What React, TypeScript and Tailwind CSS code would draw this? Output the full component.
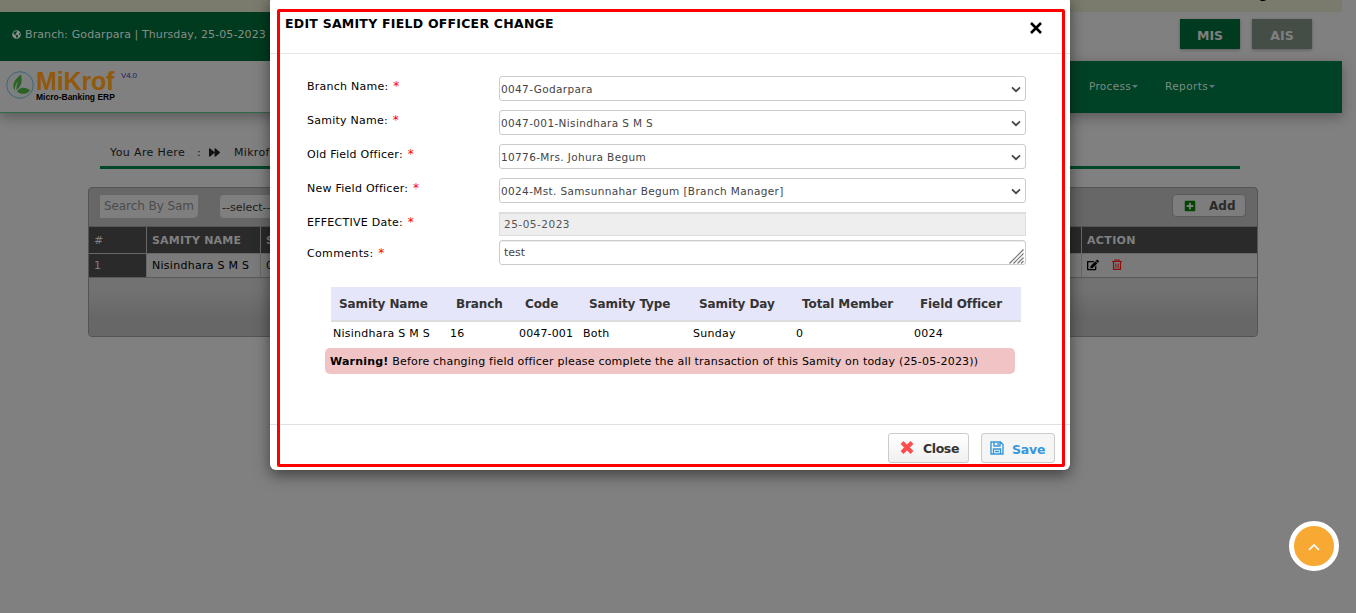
import React from "react";
import { FaGlobeAmericas, FaForward, FaPlusSquare, FaEdit } from "react-icons/fa";

type Field = { label: string; value: string };

const selects: Field[] = [
  { label: "Branch Name:", value: "0047-Godarpara" },
  { label: "Samity Name:", value: "0047-001-Nisindhara S M S" },
  { label: "Old Field Officer:", value: "10776-Mrs. Johura Begum" },
  { label: "New Field Officer:", value: "0024-Mst. Samsunnahar Begum [Branch Manager]" },
];

function Logo() {
  return (
    <div className="flex pl-[6px] pt-[8px]">
      <svg width="28" height="29" viewBox="0 0 28 29" className="mt-[2px]">
        <circle cx="14" cy="14" r="13.3" fill="#7d7f80" stroke="#3d6878" strokeWidth="1" />
        <path d="M9 19.500C5 14 9 8 15 3.500C16.500 10 15.500 15.500 10.500 19C10 16 11 13 12.500 10C9.500 13 8.500 16 9 19.500Z" fill="#2b6324" />
        <path d="M11 20.500C14 15.500 20 16 24 19.500C21 23.500 15 24 11 20.500Z" fill="#2b6324" />
      </svg>
      <div className="ml-[2px] flex w-[79px] flex-col">
        <span className="h-[23px] font-['Liberation_Sans',sans-serif] text-[25px] font-bold leading-[24px] tracking-[-0.15px] text-[#915909]">MiKrof</span>
        <span className="whitespace-nowrap font-['Liberation_Sans',sans-serif] text-[8.500px] font-bold leading-[10px] text-black">Micro-Banking ERP</span>
      </div>
      <span className="ml-[6px] mt-[2px] font-['Liberation_Sans',sans-serif] text-[8px] leading-[10px] tracking-[-0.2px] text-[#1b1b60]">V4.0</span>
    </div>
  );
}

function Caret() {
  return <i className="ml-[1px] inline-block border-x-[3px] border-t-[3px] border-x-transparent border-t-[#61768a] align-[2px]" />;
}

function TrashIcon() {
  return (
    <svg width="10" height="12" viewBox="0 0 10 12" fill="none" stroke="#8e0c0c" strokeWidth="1.200">
      <path d="M0 2.500H10M3 2.500V1H7V2.500M1.500 2.500V10.400H8.500V2.500" />
      <path d="M3.500 4.500V9M5 4.500V9M6.500 4.500V9" strokeWidth="0.700" />
    </svg>
  );
}

function Background() {
  return (
    <div className="h-[613px] w-[1356px] overflow-hidden bg-[#808080]">
      <div className="flex h-[12px] w-[1342px] justify-end bg-[#7a7a6d]">
        <span className="mr-[74px] mt-[-13px] text-[13px] font-bold leading-[13px] text-black">g</span>
      </div>
      <div className="flex h-[49px] w-[1342px] justify-between">
        <div className="flex h-[49px] w-[520px] bg-[#003b1f] pl-[12px] pt-[15px] text-[11px] leading-[16px] text-[#878f8a]">
          <FaGlobeAmericas className="mr-[4px] mt-[3px] h-[9px] w-[9px]" />
          <span className="tracking-[0.09px]">Branch: Godarpara | Thursday, 25-05-2023</span>
        </div>
        <div className="mr-[30px] mt-[7px] flex gap-3 text-[12.500px] font-bold text-[#808080]">
          <span className="flex h-[30px] w-[60px] items-center justify-center bg-[#003b1f] pt-[4px] shadow-[0_1px_3px_rgba(0,0,0,.3)]">MIS</span>
          <span className="flex h-[30px] w-[60px] items-center justify-center bg-[#444d46] pt-[4px] shadow-[0_1px_3px_rgba(0,0,0,.3)]">AIS</span>
        </div>
      </div>
      <div className="flex h-[52px] w-[1342px] shadow-[0_4px_12px_rgba(0,0,0,.3)]">
        <div className="h-[52px] w-[520px] border-b border-[#30694c] bg-[#808080]"><Logo /></div>
        <div className="flex flex-1 bg-[#004225] pl-[569px] pt-[17px] text-[10.500px] leading-[16px] text-[#7c8c83]">
          <span className="w-[76px] tracking-[0.3px]">Process<Caret /></span>
          <span className="tracking-[0.4px]">Reports<Caret /></span>
        </div>
      </div>
      <div className="ml-[100px] mt-[29px] flex h-[27px] w-[1140px] border-b-[3px] border-[#004828] pl-[10px] pt-[3px] text-[11px] leading-[16px] text-[#111]">
        <span className="w-[87px] tracking-[0.38px]">You Are Here</span>
        <span className="w-[12px]">:</span>
        <FaForward className="mr-[14px] mt-[2px] h-[11px] w-[11px]" />
        <span className="tracking-[0.3px]">Mikrof</span>
      </div>
      <div className="ml-[88px] mt-[18px] h-[150px] w-[1170px] overflow-hidden rounded border border-[#545454] bg-[#676767]">
        <div className="flex h-[39px] justify-between border-b border-[#555]">
          <div className="flex">
            <span className="ml-[11px] mt-[7px] h-[23px] w-[98px] overflow-hidden rounded-br-[5px] bg-[#7f7f7f] pl-[4px] text-[12px] leading-[22px] tracking-[-0.08px] text-[#4b4b4b]">Search By Sam</span>
            <span className="ml-[22px] mt-[7px] h-[23px] w-[140px] rounded bg-[#7f7f7f] pl-[2px] text-[11px] leading-[25px] text-[#1c1c1c]">--select--</span>
          </div>
          <span className="mr-[11px] mt-[6px] flex h-[23px] w-[74px] items-center rounded border border-[#5b5b5b] bg-[#7d7d7d] pl-[11px] text-[12px] font-bold text-[#2a2a2a]">
            <FaPlusSquare className="mr-[13px] h-[12px] w-[12px] text-[#004500]" />Add
          </span>
        </div>
        <div className="flex h-[27px] border-b border-[#686868] bg-[#2a2a2a] text-[11px] font-bold leading-[27px] text-[#808080]">
          <span className="w-[58px] border-r border-[#686868] pl-[5px] font-normal">#</span>
          <span className="w-[114px] border-r border-[#686868] pl-[5px] tracking-[0.2px]">SAMITY NAME</span>
          <span className="w-[821px] border-r border-[#686868] pl-[5px]">SAMITY CODE</span>
          <span className="pl-[5px] tracking-[0.35px]">ACTION</span>
        </div>
        <div className="flex h-[24px] border-b border-[#595959] bg-[#7a7a7a] text-[11px] leading-[23px] text-black">
          <span className="w-[58px] border-r border-[#686868] bg-[#2a2a2a] pl-[5px] text-[#808080]">1</span>
          <span className="w-[114px] border-r border-[#686868] pl-[5px] tracking-[0.27px]">Nisindhara S M S</span>
          <span className="w-[821px] border-r border-[#686868] pl-[5px]">0047-001</span>
          <span className="flex gap-[13px] pl-[5px] pt-[5px]">
            <FaEdit className="h-[12px] w-[12px]" />
            <TrashIcon />
          </span>
        </div>
        <div className="h-[60px] bg-linear-to-b from-[#727272] from-20% to-[#676767] to-65%" />
      </div>
    </div>
  );
}

function Row({ label, children, height }: { label: string; children: React.ReactNode; height: string }) {
  return (
    <div className={"flex " + height}>
      <span className="w-[192px] pt-[2px] text-[11px] leading-[16px] tracking-[0.25px] text-black">{label} <span className="ml-[1px] text-[12px] text-[#f00]">*</span></span>
      {children}
    </div>
  );
}

function Chevron() {
  return <svg width="10" height="7" viewBox="0 0 10 7" className="ml-auto mr-[4px] mt-[9px]"><path d="M1 1.300L5 5.200L9 1.300" fill="none" stroke="#444" strokeWidth="1.700" /></svg>;
}

function Modal() {
  return (
    <div className="absolute left-[270px] top-[-4px] h-[474px] w-[800px] rounded-[6px] bg-white shadow-[0_5px_15px_rgba(0,0,0,.5)]">
      <div className="flex h-[58px] justify-between border-b border-[#e5e5e5] pl-[15px] pr-[28px] text-black">
        <span className="pt-[20px] text-[12.500px] font-bold leading-[16px] tracking-[0.24px]">EDIT SAMITY FIELD OFFICER CHANGE</span>
        <svg width="12" height="12" viewBox="0 0 12 12" className="mt-[26px]"><path d="M1 1L11 11M11 1L1 11" stroke="#000" strokeWidth="2.600" /></svg>
      </div>
      <div className="h-[370px] pl-[37px] pt-[22px]">
        {selects.map((f) => (
          <Row key={f.label} label={f.label} height="h-[34px]">
            <span className="flex h-[25px] w-[527px] rounded-[3px] border border-[#ccc] pl-px text-[10.500px] leading-[25px] text-[#444]">
              <span className="tracking-[0.36px]">{f.value}</span><Chevron />
            </span>
          </Row>
        ))}
        <Row label="EFFECTIVE Date:" height="h-[28px]">
          <span className="h-[24px] w-[527px] border border-[#ddd] bg-[#eee] pl-[4px] text-[10.500px] leading-[23px] tracking-[0.5px] text-[#555] shadow-[inset_0_1px_1px_rgba(0,0,0,.075)]">25-05-2023</span>
        </Row>
        <div className="flex h-[47px]">
          <span className="w-[192px] pt-[5px] text-[11px] leading-[16px] tracking-[0.35px] text-black">Comments: <span className="ml-[1px] text-[12px] text-[#f00]">*</span></span>
          <span className="flex h-[25px] w-[527px] rounded-[3px] border border-[#ccc] pl-[4px] text-[11px] leading-[24px] text-[#444] shadow-[inset_0_1px_1px_rgba(0,0,0,.075)]">
            test
            <svg width="15" height="15" viewBox="0 0 15 15" className="ml-auto mr-px mt-[8px]"><path d="M0.500 14.500L14.500 0.500M4.500 14.500L14.500 4.500M8.500 14.500L14.500 8.500M12 14.500L14.500 12" stroke="#777" strokeWidth="1.200" /></svg>
          </span>
        </div>
        <div className="ml-[24px] w-[690px]">
          <div className="flex h-[35px] border-b-2 border-[#ddd] bg-[#e6e6fa] pl-[8px] text-[12px] font-bold leading-[34px] tracking-[-0.1px] text-[#333]">
            <span className="w-[117px]">Samity Name</span><span className="w-[69px]">Branch</span><span className="w-[64px]">Code</span><span className="w-[110px]">Samity Type</span><span className="w-[103px]">Samity Day</span><span className="w-[118px]">Total Member</span><span>Field Officer</span>
          </div>
          <div className="flex h-[26px] pl-[2px] text-[11px] leading-[23px] tracking-[0.25px] text-black">
            <span className="w-[117px]">Nisindhara S M S</span><span className="w-[69px]">16</span><span className="w-[64px] tracking-[0.15px]">0047-001</span><span className="w-[110px]">Both</span><span className="w-[103px]">Sunday</span><span className="w-[118px]">0</span><span>0024</span>
          </div>
        </div>
        <div className="ml-[18px] h-[26px] w-[690px] rounded-[5px] bg-[#f0c4c4] pl-[5px] text-[11px] leading-[27px] tracking-[0.2px] text-black"><b>Warning!</b> Before changing field officer please complete the all transaction of this Samity on today (25-05-2023))</div>
      </div>
      <div className="flex h-[46px] justify-end gap-3 border-t border-[#dde0e4] pr-[15px] pt-[8px] text-[12.500px] font-bold">
        <span className="flex h-[30px] w-[81px] items-center rounded-[3px] border border-[#ccc] bg-linear-to-b from-white to-[#f0f0f0] pl-[11px] pt-[2px] tracking-[-0.4px] text-[#333]">
          <svg width="14" height="13" viewBox="0 0 14 13" className="mb-[4px] mr-[9px]"><path d="M2 1.500L12 11.500M12 1.500L2 11.500" stroke="#ff4d4d" strokeWidth="4" /></svg>Close
        </span>
        <span className="flex h-[30px] w-[74px] items-center rounded-[3px] border border-[#ccc] bg-[#f5f5f5] pl-[8px] pt-[4px] tracking-[-0.2px] text-[#3598dc]">
          <svg width="14" height="14" viewBox="0 0 14 14" fill="none" stroke="#3598dc" strokeWidth="1.400" className="mb-[4px] mr-[8px]"><path d="M1 1H10.500L13 3.500V13H1ZM4 1V5H10V1M3.500 13V8H10.500V13M8 2V4M5 10.500H9" /></svg>Save
        </span>
      </div>
    </div>
  );
}

export default function App() {
  return (
    <div className="relative h-[613px] w-[1356px] overflow-hidden whitespace-nowrap font-['DejaVu_Sans',Verdana,sans-serif]">
      <Background />
      <Modal />
      <div className="absolute left-[277px] top-[9px] h-[458px] w-[788px] rounded-[2px] border-[3px] border-[#f00]" />
      <div className="absolute left-[1289px] top-[521px] flex h-[50px] w-[50px] items-center justify-center rounded-full border-[5px] border-white bg-[#f7a934]">
        <svg width="12" height="8" viewBox="0 0 12 8" className="mt-px"><path d="M1 7L6 2L11 7" fill="none" stroke="#fff" strokeWidth="1.700" /></svg>
      </div>
    </div>
  );
}
